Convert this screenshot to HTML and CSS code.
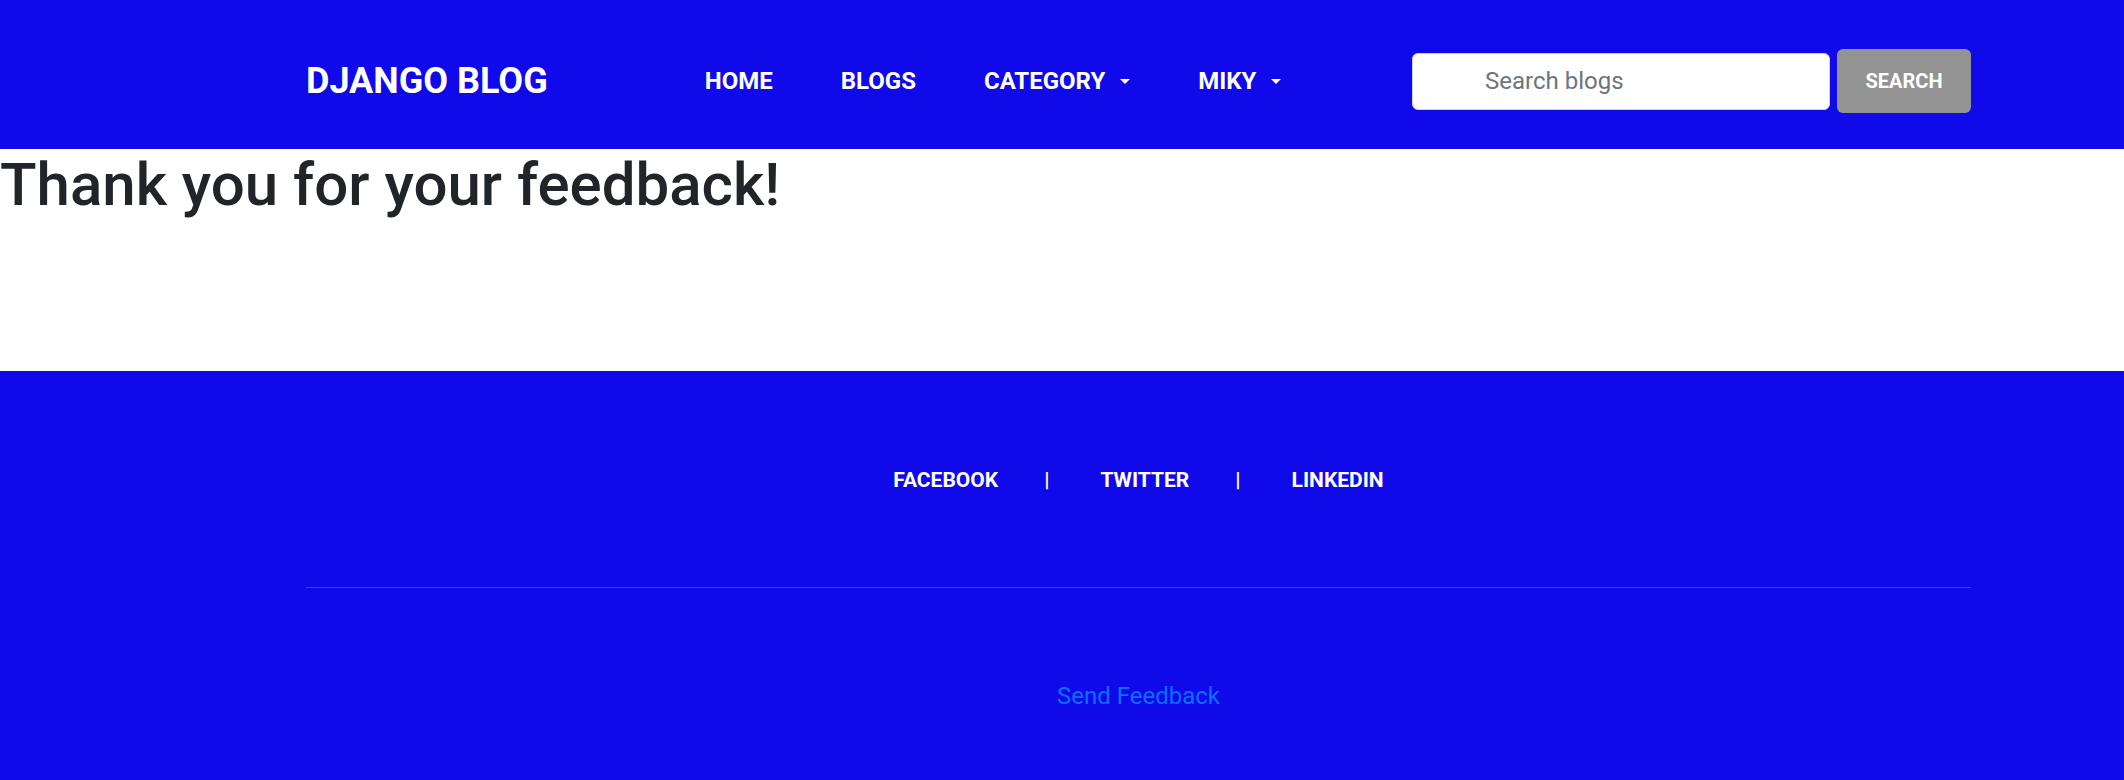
FILE: index.html
```html
<!DOCTYPE html>
<html lang="en">
<head>
<meta charset="utf-8">
<title>Django Blog</title>
<link rel="stylesheet" href="styles.css">
</head>
<body>
<div class="page">
  <header class="site-header">
    <div class="container header-inner">
      <a class="brand" href="#">DJANGO BLOG</a>
      <nav class="main-nav">
        <a class="nav-link" href="#">HOME</a>
        <a class="nav-link" href="#">BLOGS</a>
        <a class="nav-link dropdown" href="#">CATEGORY<span class="caret"></span></a>
        <a class="nav-link dropdown" href="#">MIKY<span class="caret"></span></a>
      </nav>
      <form class="search-form">
        <input class="search-input" type="text" placeholder="Search blogs">
        <button class="search-btn" type="button">SEARCH</button>
      </form>
    </div>
  </header>

  <main class="content">
    <h1 class="thanks">Thank you for your feedback!</h1>
  </main>

  <footer class="site-footer">
    <div class="container">
      <div class="social">
        <a class="social-link" href="#">FACEBOOK</a>
        <span class="sep">|</span>
        <a class="social-link" href="#">TWITTER</a>
        <span class="sep">|</span>
        <a class="social-link" href="#">LINKEDIN</a>
      </div>
      <hr class="divider">
      <p class="feedback"><a href="#">Send Feedback</a></p>
    </div>
  </footer>
</div>
</body>
</html>
```
FILE: styles.css
```css
html {
  overflow: hidden;
}
body {
  margin: 0;
  font-family: Roboto, "Noto Sans", Arial, sans-serif;
  color: #212529;
  background: #ffffff;
}
a {
  text-decoration: none;
}
.container {
  width: 1665px;
  margin: 0 153px 0 auto;
}

/* Header */
.site-header {
  background: #100aeb;
  height: 149px;
  box-sizing: border-box;
  padding-top: 13px;
  display: flex;
  align-items: center;
}
.header-inner {
  display: flex;
  align-items: center;
}
.brand {
  color: #ffffff;
  font-weight: 700;
  font-size: 36px;
  line-height: 1.2;
  margin-top: 2px;
}
.main-nav {
  display: flex;
  align-items: center;
  margin-left: 157px;
  gap: 68px;
}
.nav-link {
  color: #ffffff;
  font-weight: 700;
  font-size: 24px;
  line-height: 1.5;
  display: flex;
  align-items: center;
}
.caret {
  display: inline-block;
  width: 0;
  height: 0;
  margin-left: 15px;
  border-top: 5px solid #ffffff;
  border-left: 5.5px solid transparent;
  border-right: 5.5px solid transparent;
}
.search-form {
  margin-left: auto;
  display: flex;
  align-items: center;
  gap: 7px;
}
.search-input {
  width: 418px;
  height: 57px;
  box-sizing: border-box;
  border: 1.5px solid #ced4da;
  border-radius: 6px;
  padding: 0 12px 0 72px;
  font-family: Roboto, "Noto Sans", Arial, sans-serif;
  font-size: 24px;
  color: #495057;
  background: #ffffff;
  outline: none;
}
.search-input::placeholder {
  color: #6c757d;
}
.search-btn {
  width: 134px;
  height: 64px;
  border: none;
  border-radius: 6px;
  background: #939393;
  color: #ffffff;
  font-family: Roboto, "Noto Sans", Arial, sans-serif;
  font-weight: 700;
  font-size: 20px;
  padding: 0;
}

/* Main */
.content {
  height: 222px;
}
.thanks {
  margin: 0 0 12px;
  font-size: 60px;
  font-weight: 500;
  line-height: 1.2;
  color: #212529;
}

/* Footer */
.site-footer {
  background: #100aeb;
  padding: 94px 0 70px;
}
.social {
  display: flex;
  justify-content: center;
  align-items: center;
  font-size: 21px;
  line-height: 1.5;
  font-weight: 700;
  color: #ffffff;
}
.social-link {
  color: #ffffff;
}
.sep {
  margin: 0 51px 0 46px;
}
.divider {
  margin: 90px 0 0;
  border: 0;
  border-top: 1px solid rgba(255, 255, 255, 0.2);
  height: 0;
}
.feedback {
  margin: 90px 0 0;
  text-align: center;
  font-size: 24px;
  line-height: 1.5;
}
.feedback a {
  color: #0d6efd;
}
```
